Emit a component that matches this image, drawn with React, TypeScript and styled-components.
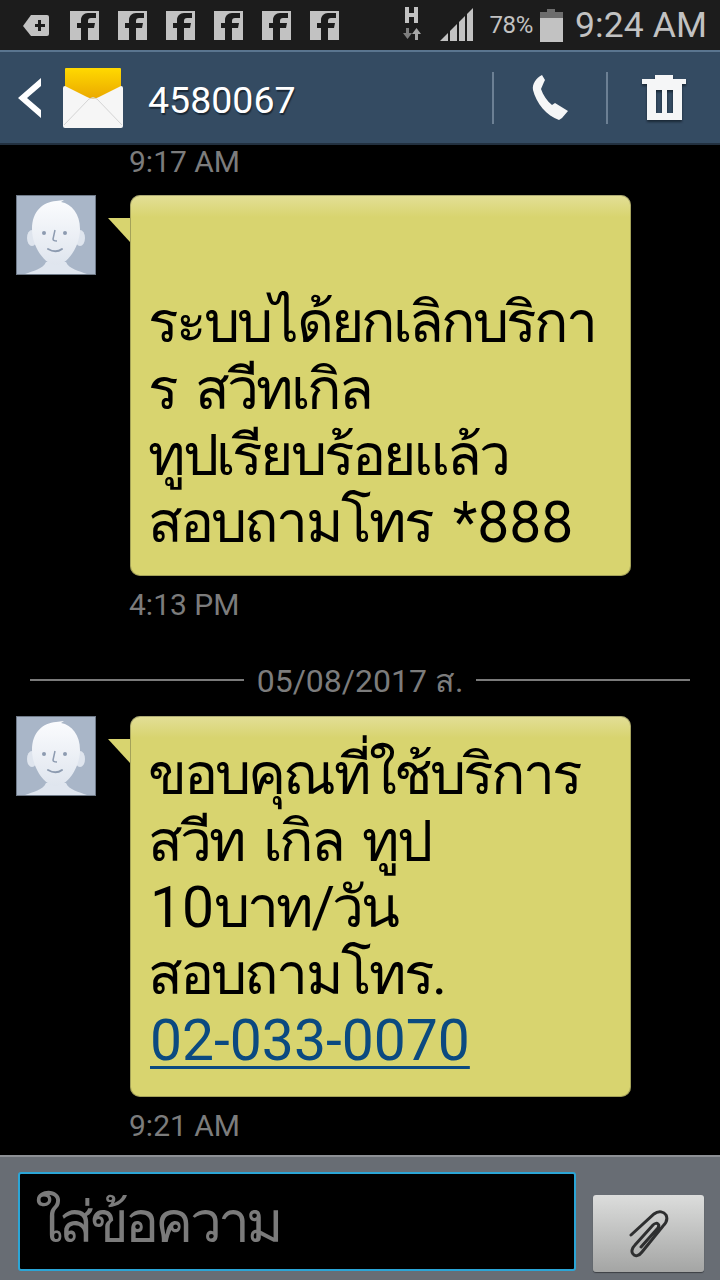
import styled, { createGlobalStyle } from "styled-components";

const GlobalStyle = createGlobalStyle`
  html, body {
    margin: 0;
    padding: 0;
    background: #000;
  }
  * {
    box-sizing: border-box;
  }
`;

const Screen = styled.div`
  width: 720px;
  height: 1280px;
  display: flex;
  flex-direction: column;
  overflow: hidden;
  background: #000;
  font-family: Roboto, "Noto Sans", "Liberation Sans", sans-serif;
`;

const StatusBar = styled.div`
  height: 50px;
  flex: none;
  display: flex;
  align-items: center;
  padding: 0 13px 0 23px;
  background: #1c1c1c;
  color: #c2c2c2;
`;

const NotifyIcons = styled.div`
  display: flex;
  align-items: center;
  gap: 19px;
  margin-left: 21px;
`;

const StatusRight = styled.div`
  margin-left: auto;
  display: flex;
  align-items: center;
  gap: 18px;
`;

const BatteryText = styled.span`
  font-size: 24px;
  margin: 0 -11px 0 -2px;
  letter-spacing: -0.4px;
`;

const ClockText = styled.span`
  font-size: 35.5px;
  margin-left: -6px;
  letter-spacing: 0.1px;
`;

const Toolbar = styled.div`
  height: 95px;
  flex: none;
  display: flex;
  align-items: center;
  gap: 22px;
  padding: 0 34px 0 18px;
  background: #344b62;
  border-top: 2px solid #5a758f;
  border-bottom: 2px solid #22303f;
`;

const ContactName = styled.span`
  margin: 5px 0 0 3px;
  font-size: 37.5px;
  color: #fff;
  text-shadow: 1px 2px 1px #1a2836;
`;

const ToolbarActions = styled.div`
  margin-left: auto;
  display: flex;
  align-items: center;
  height: 52px;
`;

const ActionDivider = styled.div`
  width: 2px;
  height: 52px;
  background: #6c8094;
`;

const ActionSlot = styled.div<{ $width: number; $end?: boolean }>`
  width: ${({ $width }) => $width}px;
  display: flex;
  justify-content: ${({ $end }) => ($end ? "flex-end" : "center")};
`;

const MessageList = styled.div`
  flex: 1;
  min-height: 0;
  display: flex;
  flex-direction: column;
  align-items: stretch;
  padding-top: 1px;
`;

const TimeLabel = styled.div<{ $before: number; $after: number }>`
  height: 32px;
  line-height: 32px;
  margin: ${({ $before }) => $before}px 0 ${({ $after }) => $after}px 129px;
  font-size: 30px;
  color: #7c7c7c;
`;

const MessageRow = styled.div`
  display: flex;
  align-items: flex-start;
  padding-left: 16px;
`;

const Avatar = styled.div`
  width: 80px;
  height: 80px;
  flex: none;
  border: 1px solid #6f7a88;
  background: #a9b6c8;
  overflow: hidden;
`;

const Bubble = styled.div<{ $pad: number }>`
  position: relative;
  width: 501px;
  height: 381px;
  margin-left: 34px;
  padding: ${({ $pad }) => $pad}px 12px 0 18px;
  border-radius: 10px;
  background: linear-gradient(#e3df97 0, #d8d46f 22px, #d8d46f 100%);
  box-shadow: inset 0 0 0 1px rgba(70, 70, 50, 0.35);
  color: #000;
  font-family: Roboto, "Noto Sans", sans-serif;
  font-size: 57px;
  line-height: 66.5px;
  letter-spacing: -2.9px;
  word-spacing: 7.5px;

  &::before {
    content: "";
    position: absolute;
    left: -22px;
    top: 23px;
    width: 22px;
    height: 24px;
    background: #d8d46f;
    clip-path: polygon(0 0, 100% 0, 100% 100%);
  }
`;

const BubbleLine = styled.div`
  white-space: nowrap;
`;

const Latin = styled.span`
  margin-left: 2px;
  letter-spacing: 0;
`;

const PhoneLink = styled.a`
  margin-left: 2px;
  color: #0b4a80;
  letter-spacing: 0;
  text-decoration: underline;
  text-decoration-thickness: 3px;
  text-underline-offset: 6px;
`;

const DateDivider = styled.div`
  height: 32px;
  margin: 0 30px 20px;
  display: flex;
  align-items: center;
  gap: 13px;
  font-size: 32px;
  color: #7c7c7c;
`;

const DateRule = styled.div`
  flex: 1;
  height: 2px;
  background: #7a7a7a;
`;

const InputBar = styled.div`
  height: 125px;
  flex: none;
  display: flex;
  align-items: flex-start;
  padding: 15px 16px 0 18px;
  background: #686d74;
  border-top: 2px solid #8d9095;
`;

const MessageField = styled.div`
  width: 558px;
  height: 99px;
  padding: 0 15px;
  display: flex;
  align-items: center;
  border: 2px solid #2ba5d6;
  border-radius: 3px;
  background: #000;
  color: #7b7b7b;
  font-size: 57px;
  letter-spacing: -3.9px;
`;

const AttachButton = styled.div`
  width: 111px;
  height: 77px;
  margin: 23px 0 0 17px;
  display: flex;
  align-items: center;
  justify-content: center;
  border-radius: 3px;
  background: linear-gradient(#dcdddc, #a4a5a4);
  box-shadow: 0 1px 1px #3c3f44;
`;

const TrashSvg = styled.svg`
  filter: drop-shadow(0 2px 1px #1a2836);
`;

const FacebookIcon = () => (
  <svg width="29" height="29" viewBox="0 0 29 29">
    <rect width="29" height="29" fill="#c2c2c2" />
    <path
      d="M11 29V17H7v-5h4V9c0-4 3-7 7-7h8v5h-5c-2 0-3 1-3 3v2h7l-1 5h-6v12z"
      fill="#1c1c1c"
    />
  </svg>
);

const AddTabIcon = () => (
  <svg width="26" height="21" viewBox="0 0 26 21">
    <path
      d="M8 0h16a2 2 0 0 1 2 2v17a2 2 0 0 1-2 2H8l-8-10z"
      fill="#c2c2c2"
    />
    <path d="M12 9h3V5h3v4h4v3h-4v4h-3v-4h-3z" fill="#1c1c1c" />
  </svg>
);

const NetworkIcon = () => (
  <svg width="20" height="36" viewBox="0 0 20 36">
    <path d="M3 0h4v6h5V0h4v16h-4v-6H7v6H3z" fill="#c2c2c2" />
    <path d="M1 26h3v-5h3v5h3l-4.500 6z" fill="#7e7e7e" />
    <path d="M10 27h3v6h3v-6h3l-4.500-6z" fill="#a8a8a8" />
  </svg>
);

const SignalIcon = () => (
  <svg width="34" height="34" viewBox="0 0 34 34">
    <path d="M0 33l8-8v8z" fill="#c2c2c2" />
    <path d="M10 33V23l7-7v17z" fill="#c2c2c2" />
    <path d="M19 33V14l6-6v25z" fill="#c2c2c2" />
    <path d="M27 33V6l6-6v33z" fill="#c2c2c2" />
  </svg>
);

const BatteryIcon = () => (
  <svg width="23" height="33" viewBox="0 0 23 33">
    <path d="M7 0h8v3h8v30H0V3h7z" fill="#c2c2c2" />
    <rect y="3" width="23" height="6" fill="#6d6d6d" />
    <rect x="7" width="8" height="3" fill="#6d6d6d" />
  </svg>
);

const BackIcon = () => (
  <svg width="23" height="40" viewBox="0 0 23 40">
    <path d="M23 0v8L9 20l14 12v8L0 20z" fill="#fff" />
  </svg>
);

const EnvelopeIcon = () => (
  <svg width="60" height="60" viewBox="0 0 60 60">
    <defs>
      <linearGradient id="flap" x1="0" y1="0" x2="0" y2="1">
        <stop offset="0" stopColor="#ffd900" />
        <stop offset="1" stopColor="#eba900" />
      </linearGradient>
    </defs>
    <rect x="0" y="18" width="60" height="42" rx="2" fill="#f6f6f6" />
    <path d="M3 0h54a1 1 0 0 1 1 1v17L36 29q-6 3-12 0L2 18V1a1 1 0 0 1 1-1z" fill="url(#flap)" />
    <path d="M1 57l25-26q4-3 8 0l25 26" fill="none" stroke="#d4d4d4" strokeWidth="1" />
  </svg>
);

const PhoneIcon = () => (
  <svg width="36" height="46" viewBox="0 0 36 46">
    <path
      d="M10 0l3 5-1 2-3 7c2 6 6 12 11 16l3-2 13 8-6 7-3 2C15 41 4 28 1 15 0 9 4 3 10 0z"
      fill="#f5f6f7"
    />
  </svg>
);

const TrashIcon = () => (
  <TrashSvg width="44" height="46" viewBox="0 0 44 46">
    <path d="M13 0h18v4h13v5H0V4h13z" fill="#f5f6f7" />
    <path
      d="M5 9h35v36H5zM14 15v23h6V15zM25 15v23h6V15z"
      fill="#f5f6f7"
      fillRule="evenodd"
    />
  </TrashSvg>
);

const PaperclipIcon = () => (
  <svg width="40" height="48" viewBox="0 0 40 48" fill="none" stroke="#2e2f30" strokeWidth="3" strokeLinecap="round">
    <path d="M2 25L25 4c5-4 10-2 12 1 2 4 0 8-3 11L13 42c-3 4-7 5-9 2-2-2-1-6 2-9L24 15c2-2 4-2 5-1 1 1 1 3-1 5L12 37" />
  </svg>
);

const AvatarFace = () => (
  <svg width="78" height="78" viewBox="0 0 78 78">
    <defs>
      <linearGradient id="skin" x1="0" y1="0" x2="0" y2="1">
        <stop offset="0" stopColor="#fbfcfe" />
        <stop offset="1" stopColor="#dfe5ee" />
      </linearGradient>
    </defs>
    <path d="M8 78c8-3 18-5 21-12h20c3 7 13 9 21 12z" fill="#e0e6ef" />
    <ellipse cx="15" cy="42" rx="5" ry="8" fill="#dfe5ee" />
    <ellipse cx="63" cy="42" rx="5" ry="8" fill="#dfe5ee" />
    <path d="M39 5l8-1-3 2c11 2 19 12 19 27 0 18-13 36-24 36S15 51 15 33C15 15 26 6 39 5z" fill="url(#skin)" />
    <circle cx="27" cy="37" r="2" fill="#8d9bb0" />
    <circle cx="48" cy="37" r="2" fill="#8d9bb0" />
    <path d="M38 34l-2 9c0 2 2 2 4 2" fill="none" stroke="#8d9bb0" strokeWidth="1.500" />
    <path d="M31 53c5 3 10 3 14 0" fill="none" stroke="#8d9bb0" strokeWidth="2" strokeLinecap="round" />
  </svg>
);

const App = () => {
  return (
    <Screen>
      <GlobalStyle />
      <StatusBar>
        <AddTabIcon />
        <NotifyIcons>
          {[0, 1, 2, 3, 4, 5].map((i) => (
            <FacebookIcon key={i} />
          ))}
        </NotifyIcons>
        <StatusRight>
          <NetworkIcon />
          <SignalIcon />
          <BatteryText>78%</BatteryText>
          <BatteryIcon />
          <ClockText>9:24 AM</ClockText>
        </StatusRight>
      </StatusBar>

      <Toolbar>
        <BackIcon />
        <EnvelopeIcon />
        <ContactName>4580067</ContactName>
        <ToolbarActions>
          <ActionDivider />
          <ActionSlot $width={112}>
            <PhoneIcon />
          </ActionSlot>
          <ActionDivider />
          <ActionSlot $width={78} $end>
            <TrashIcon />
          </ActionSlot>
        </ToolbarActions>
      </Toolbar>

      <MessageList>
        <TimeLabel $before={0} $after={17}>9:17 AM</TimeLabel>
        <MessageRow>
          <Avatar>
            <AvatarFace />
          </Avatar>
          <Bubble $pad={95}>
            <BubbleLine>ระบบได้ยกเลิกบริกา</BubbleLine>
            <BubbleLine>ร สวีทเกิล</BubbleLine>
            <BubbleLine>ทูปเรียบร้อยแล้ว</BubbleLine>
            <BubbleLine>
              สอบถามโทร <Latin>*888</Latin>
            </BubbleLine>
          </Bubble>
        </MessageRow>
        <TimeLabel $before={13} $after={43}>4:13 PM</TimeLabel>
        <DateDivider>
          <DateRule />
          05/08/2017 ส.
          <DateRule />
        </DateDivider>
        <MessageRow>
          <Avatar>
            <AvatarFace />
          </Avatar>
          <Bubble $pad={26}>
            <BubbleLine>ขอบคุณที่ใช้บริการ</BubbleLine>
            <BubbleLine>สวีท เกิล ทูป</BubbleLine>
            <BubbleLine>
              <Latin>10</Latin>บาท/วัน
            </BubbleLine>
            <BubbleLine>สอบถามโทร.</BubbleLine>
            <BubbleLine>
              <PhoneLink>02-033-0070</PhoneLink>
            </BubbleLine>
          </Bubble>
        </MessageRow>
        <TimeLabel $before={13} $after={0}>9:21 AM</TimeLabel>
      </MessageList>

      <InputBar>
        <MessageField>ใส่ข้อความ</MessageField>
        <AttachButton>
          <PaperclipIcon />
        </AttachButton>
      </InputBar>
    </Screen>
  );
};

export default App;
